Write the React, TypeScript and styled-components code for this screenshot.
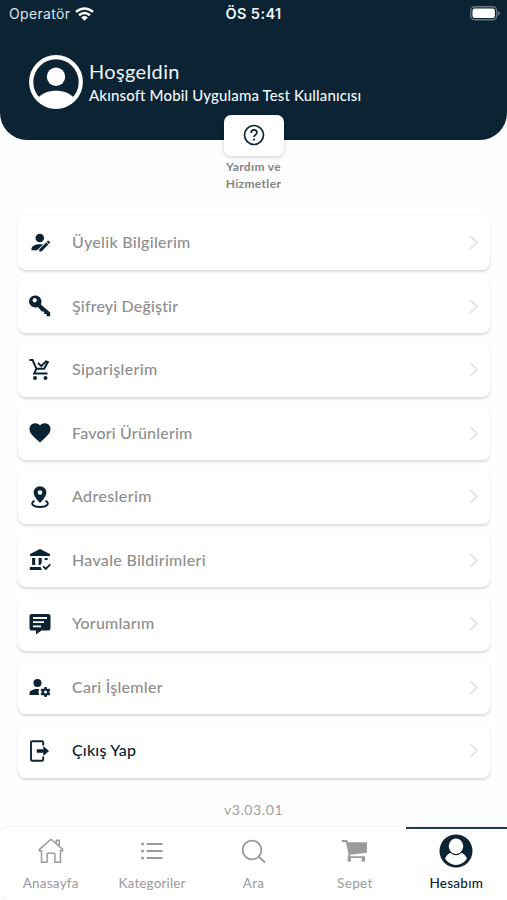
import React from "react";
import styled, { createGlobalStyle } from "styled-components";

const NAVY = "#0b2333";
const GRAY = "#8e8e8e";

const GlobalStyle = createGlobalStyle`
  *, *::before, *::after { box-sizing: border-box; }
  body { margin: 0; background: #fefefe; font-family: Lato, "Open Sans", sans-serif; }
`;

const Screen = styled.div`
  width: 507px;
  height: 900px;
  display: flex;
  flex-direction: column;
  background: #fefefe;
  overflow: hidden;
`;

const Header = styled.header`
  height: 139.5px;
  flex: none;
  background: ${NAVY};
  border-radius: 0 0 27px 27px;
  color: #f1f6fa;
`;

const StatusBar = styled.div`
  height: 27px;
  padding: 0 7px 0 9px;
  display: grid;
  grid-template-columns: 1fr auto 1fr;
  align-items: center;
  font-family: Inter, "Liberation Sans", sans-serif;
  font-size: 14px;
`;

const Carrier = styled.div`
  display: flex;
  align-items: center;
  gap: 5px;
  letter-spacing: 0.35px;
  color: #dce3e8;
`;

const Clock = styled.div`
  font-weight: 600;
  font-size: 14.5px;
  letter-spacing: 0.4px;
  padding-right: 2px;
`;

const BatterySlot = styled.div`
  display: flex;
  justify-content: flex-end;
`;

const Profile = styled.div`
  display: flex;
  align-items: center;
  gap: 6px;
  padding: 28px 0 0 29px;
`;

const Greeting = styled.div`
  display: flex;
  flex-direction: column;
  padding-top: 2px;
`;

const Label = styled.span<{ $size: number; $gap?: number; $weight?: number; $line?: number }>`
  font-size: ${(p) => p.$size}px;
  font-weight: ${(p) => p.$weight ?? 400};
  letter-spacing: ${(p) => p.$gap ?? 0}px;
  line-height: ${(p) => p.$line ?? 24}px;
  white-space: nowrap;
`;

const Help = styled.button`
  position: relative;
  flex: none;
  width: 60px;
  height: 85px;
  margin: -24.5px auto 0;
  padding: 0;
  border: 0;
  background: none;
  display: flex;
  flex-direction: column;
  align-items: center;
  font-family: inherit;
  color: #858585;
`;

const HelpTile = styled.span`
  width: 60px;
  height: 40.5px;
  flex: none;
  border-radius: 7px;
  background: #fff;
  box-shadow: 0 1px 4px rgba(0, 0, 0, 0.2);
  display: flex;
  align-items: center;
  justify-content: center;
  margin-bottom: 3.5px;
`;

const Menu = styled.nav`
  display: flex;
  flex-direction: column;
  gap: 9.5px;
  padding: 15.5px 17px 0 18px;
`;

const MenuRow = styled.a<{ $strong?: boolean }>`
  height: 54px;
  border-radius: 8px;
  background: #fff;
  box-shadow: 0 1.5px 2.5px rgba(0, 0, 0, 0.14);
  display: grid;
  grid-template-columns: 44px 1fr 21px;
  align-items: center;
  justify-items: start;
  color: ${(p) => (p.$strong ? NAVY : GRAY)};
`;

const RowIcon = styled.span`
  width: 24px;
  height: 24px;
  color: ${NAVY};
  margin-left: 10px;
`;

const RowText = styled.span`
  padding: 0 0 1px 10px;
`;

const Version = styled.div`
  height: 48px;
  padding-top: 20px;
  text-align: center;
  color: #a0a0a0;
  flex: none;
`;

const TabBar = styled.nav`
  flex: none;
  height: 73px;
  margin-top: auto;
  display: grid;
  grid-template-columns: repeat(5, 1fr);
  background: #fff;
  border-radius: 8px 0 0 8px;
  box-shadow: 0 0 2px rgba(0, 0, 0, 0.14);
`;

const Tab = styled.a<{ $active?: boolean }>`
  display: flex;
  flex-direction: column;
  align-items: center;
  border-top: 2px solid ${(p) => (p.$active ? "#1e3b50" : "transparent")};
  color: ${(p) => (p.$active ? NAVY : "#9b9b9b")};
`;

const TabIcon = styled.span`
  height: 44px;
  display: flex;
  align-items: center;
`;

const Icon24 = ({ children }: { children: React.ReactNode }) => (
  <svg width="24" height="24" viewBox="0 0 24 24" fill="currentColor" display="block">{children}</svg>
);

const WifiIcon = () => (
  <svg width="19" height="14" viewBox="0 0 19 14" fill="none" stroke="#fff" strokeWidth="2.5">
    <path d="M1 4.9Q9.5-2 18 4.9M4 8.2Q9.5 3.7 15 8.2" />
    <path d="M6.2 10.4Q9.5 7.8 12.8 10.4L9.5 13.8Z" fill="#fff" stroke="none" />
  </svg>
);

const BatteryIcon = () => (
  <svg width="30" height="15" viewBox="0 0 30 15">
    <rect x=".7" y=".7" width="26" height="13" rx="4" fill="none" stroke="#68767f" strokeWidth="1.4" />
    <rect x="2.5" y="2.5" width="22.4" height="9.4" rx="2.2" fill="#fff" />
    <path d="M28 5Q30 6 30 7.2T28 9.7Z" fill="#68767f" />
  </svg>
);

const AvatarIcon = () => (
  <svg width="54" height="54" viewBox="0 0 54 54">
    <defs><clipPath id="avatar-clip"><circle cx="27" cy="27" r="26" /></clipPath></defs>
    <circle cx="27" cy="27" r="24.8" fill="none" stroke="#fff" strokeWidth="4.2" />
    <circle cx="27" cy="21.8" r="9.2" fill="#fff" />
    <path clipPath="url(#avatar-clip)" d="M9.5 42.6C16 33.4 38 33.4 44.5 42.6L41 53H13Z" fill="#fff" />
  </svg>
);

const HelpIcon = () => (
  <svg width="22" height="22" viewBox="0 0 22 22" fill="none" stroke={NAVY} strokeWidth="1.7">
    <circle cx="11" cy="11" r="9.5" />
    <path d="M8.1 9Q8.1 5.9 11 5.9T13.9 8.6C13.9 10.7 11 10.6 11 13.1" />
    <circle cx="11" cy="15.6" r="1.1" fill={NAVY} stroke="none" />
  </svg>
);

const icons = {
  user: <Icon24><circle cx="11.8" cy="7" r="4.3" /><path d="M3.5 19.3V17.8C3.5 14.4 9 12.5 15 13.5L9.2 19.3Z" /><path d="M11.3 20.5V18.3L18.2 11.4L20.4 13.6L13.5 20.5ZM18.7 10.9L19.8 9.8Q20.3 9.4 20.8 9.9L21.9 11Q22.3 11.5 21.9 12L20.9 13.1Z" /></Icon24>,
  key: <Icon24><path fillRule="evenodd" d="M2.5 3.5C5 .8 9.2.7 11.7 3.2C13.7 5.2 14 8 12.9 10.4L22.2 18.5V22.3H18.6V19.9H16.2V17.5H13.8L9.9 12.9C7.5 13.9 4.6 13.4 2.8 11.5C.6 9.3.4 5.9 2.5 3.5M5.2 4.7A2.1 2.1 0 1 0 8.2 7.7A2.1 2.1 0 1 0 5.2 4.7" /></Icon24>,
  cart: <Icon24><path d="M1.5 2H4.5L8.5 10.8H16.2L20.3 3.3M8.5 10.8L6.2 15.4H19.5M10.1 5L13.3 8.1L18.7 2.7" fill="none" stroke="currentColor" strokeWidth="2" /><circle cx="7" cy="20" r="2" /><circle cx="17.5" cy="20" r="2" /></Icon24>,
  heart: <Icon24><path d="M12 21.5L10.5 20.1C5.2 15.3 1.5 12 1.5 7.9C1.5 4.6 4.1 2.3 7.2 2.3C9 2.3 10.8 3.1 12 4.5C13.2 3.1 15 2.3 16.8 2.3C19.9 2.3 22.5 4.6 22.5 7.9C22.5 12 18.8 15.3 13.5 20.1Z" /></Icon24>,
  pin: <Icon24><path fillRule="evenodd" d="M12 1.2A6.4 6.4 0 0 0 5.6 7.6C5.6 12.3 12 18 12 18S18.4 12.3 18.4 7.6A6.4 6.4 0 0 0 12 1.2M12 5.2A2.3 2.3 0 1 1 12 9.8A2.3 2.3 0 1 1 12 5.2" /><path d="M6.6 15.9C2.5 17.5 3.2 22 12 22S21.5 17.5 17.4 15.9" fill="none" stroke="currentColor" strokeWidth="1.9" /></Icon24>,
  bank: <Icon24><path d="M17.8 22.2L14.5 19L15.8 17.7L17.8 19.6L21.7 15.7L22.9 17ZM13.7 10H10.6V17H12.6C12.7 16.2 13.2 15.4 13.7 14.7ZM16.7 10V12.3C17.7 12 18.7 12 19.6 12.1V10ZM12.6 19H1.8V22H14C13.3 21.2 12.8 20.1 12.6 19M22 6L12 1L2 6V8H22ZM7.2 17V10H4.1V17Z" /></Icon24>,
  comment: <Icon24><path fillRule="evenodd" d="M3.5 2H20.5Q22.5 2 22.5 4V16.5Q22.5 18.5 20.5 18.5H13.5L8 22.6V18.5H3.5Q1.5 18.5 1.5 16.5V4Q1.5 2 3.5 2M5 5V6.9H19V5ZM5 9.2V11.1H16V9.2ZM5 13.4V15.3H13V13.4Z" /></Icon24>,
  settings: <Icon24><g transform="translate(-.5)"><path fillRule="evenodd" d="M10 4A4 4 0 0 0 10 12A4 4 0 0 0 10 4M17 12L16.55 13.53L15.7 14L14.2 13.5L13.1 15.4L14.27 16.5V17.5L13.1 18.6L14.2 20.5L15.7 20L16.55 20.47L17 22H19L19.43 20.47L20.27 20L21.8 20.5L22.9 18.6L21.7 17.5V16.5L22.9 15.4L21.8 13.5L20.27 14L19.42 13.53L19 12ZM10 14C5.58 14 2 15.79 2 18V20H11.68A7 7 0 0 1 11.64 14.09ZM18 15.5A1.5 1.5 0 1 1 18 18.5A1.5 1.5 0 1 1 18 15.5" /></g></Icon24>,
  exit: <Icon24><path d="M15.2 6.4V3.4Q15.2 2.2 14 2.2H4.3Q3 2.2 3 3.5V20.5Q3 21.8 4.3 21.8H14Q15.2 21.8 15.2 20.6V17.6" fill="none" stroke="currentColor" strokeWidth="1.9" /><path d="M8.8 10.2H15.3V7L21.1 12L15.3 17V13.8H8.8Z" /></Icon24>,
};

const Chevron = () => (
  <svg width="10" height="15" viewBox="0 0 10 15" fill="none" stroke="#e6e6e6" strokeWidth="1.9"><path d="M1.2 1L8 7.5L1.2 14" /></svg>
);

const rows: { icon: keyof typeof icons; text: string; gap: number; strong?: boolean }[] = [
  { icon: "user", text: "Üyelik Bilgilerim", gap: 0.29 },
  { icon: "key", text: "Şifreyi Değiştir", gap: 0.17 },
  { icon: "cart", text: "Siparişlerim", gap: 0.33 },
  { icon: "heart", text: "Favori Ürünlerim", gap: 0.2 },
  { icon: "pin", text: "Adreslerim", gap: 0.38 },
  { icon: "bank", text: "Havale Bildirimleri", gap: 0.3 },
  { icon: "comment", text: "Yorumlarım", gap: 0.21 },
  { icon: "settings", text: "Cari İşlemler", gap: 0.26 },
  { icon: "exit", text: "Çıkış Yap", gap: 0.2, strong: true },
];

const HomeIcon = () => (
  <svg width="26" height="26" viewBox="0 0 26 26" fill="none" stroke="currentColor" strokeWidth="1.5" strokeLinejoin="round">
    <path d="M3.5 12.5L1.4 12.9V11.4L13 1.3L24.6 11.4V12.9L22.5 12.5V24.3H16.9V16Q16.9 15.2 16 15.2H10Q9.1 15.2 9.1 16V24.3H3.5ZM18.3 5.6V2.3H21.2V8.2" />
  </svg>
);

const ListIcon = () => (
  <svg width="24" height="20" viewBox="0 0 24 20" fill="none" stroke="currentColor" strokeWidth="2" strokeLinecap="round">
    <path d="M7.5 3H21.8M7.5 10H21.8M7.5 17H21.8" />
    <path d="M2.5 3H2.6M2.5 10H2.6M2.5 17H2.6" strokeWidth="3" />
  </svg>
);

const SearchIcon = () => (
  <svg width="25" height="25" viewBox="0 0 25 25" fill="none" stroke="currentColor" strokeWidth="1.9" strokeLinecap="round">
    <circle cx="11" cy="11" r="9.4" /><path d="M18 18L23.5 23" />
  </svg>
);

const CartIcon = () => (
  <svg width="27" height="24" viewBox="0 0 27 24" fill="currentColor">
    <path fillRule="evenodd" d="M.7 1H6.1L7 3.2H26V13.8L9.4 15.8L9 17.2H24V22.5H20.7V19H9.9V22.5H6.7V17.8L7.6 15.6L4.9 2.9H.7Z" />
  </svg>
);

const AccountIcon = () => (
  <svg width="34" height="34" viewBox="0 0 34 34">
    <circle cx="17" cy="17" r="16.5" fill="currentColor" />
    <ellipse cx="17" cy="12.3" rx="7.2" ry="7.7" fill="#fff" />
    <path d="M6 24.5Q7.4 20.5 11.3 18.7Q17 24 22.7 18.7Q26.6 20.5 28 24.5Q24 31 17 31T6 24.5Z" fill="#fff" />
  </svg>
);

const tabs = [
  { icon: <HomeIcon />, text: "Anasayfa", gap: 0.25 },
  { icon: <ListIcon />, text: "Kategoriler", gap: 0.15 },
  { icon: <SearchIcon />, text: "Ara", gap: 0.3 },
  { icon: <CartIcon />, text: "Sepet", gap: 0.35 },
  { icon: <AccountIcon />, text: "Hesabım", gap: 0.25, active: true },
];

export default function App() {
  return (
    <Screen>
      <GlobalStyle />
      <Header>
        <StatusBar>
          <Carrier>Operatör <WifiIcon /></Carrier>
          <Clock>ÖS 5:41</Clock>
          <BatterySlot><BatteryIcon /></BatterySlot>
        </StatusBar>
        <Profile>
          <AvatarIcon />
          <Greeting>
            <Label $size={20} $gap={0.36} $line={25}>Hoşgeldin</Label>
            <Label $size={15} $gap={0.14} $line={23} $weight={500}>Akınsoft Mobil Uygulama Test Kullanıcısı</Label>
          </Greeting>
        </Profile>
      </Header>
      <Help>
        <HelpTile><HelpIcon /></HelpTile>
        <Label $size={12} $gap={0.35} $line={16.5} $weight={700}>Yardım ve</Label>
        <Label $size={12} $gap={0.35} $line={16.5} $weight={700}>Hizmetler</Label>
      </Help>
      <Menu>
        {rows.map((row) => (
          <MenuRow key={row.text} $strong={row.strong}>
            <RowIcon>{icons[row.icon]}</RowIcon>
            <RowText><Label $size={16} $gap={row.gap} $weight={500}>{row.text}</Label></RowText>
            <Chevron />
          </MenuRow>
        ))}
      </Menu>
      <Version><Label $size={14} $gap={0.6}>v3.03.01</Label></Version>
      <TabBar>
        {tabs.map((tab) => (
          <Tab key={tab.text} $active={tab.active}>
            <TabIcon>{tab.icon}</TabIcon>
            <Label $size={13.5} $gap={tab.gap} $line={20} $weight={tab.active ? 500 : 400}>{tab.text}</Label>
          </Tab>
        ))}
      </TabBar>
    </Screen>
  );
}
